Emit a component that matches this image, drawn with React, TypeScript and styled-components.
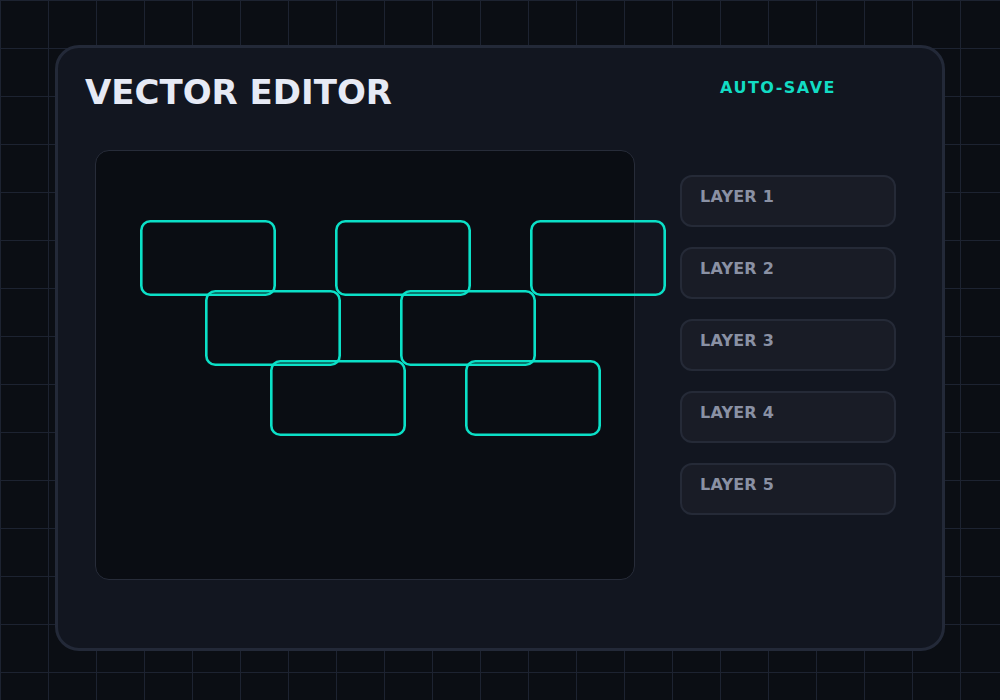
import React from 'react';
import styled, { createGlobalStyle } from 'styled-components';

const GlobalStyle = createGlobalStyle`
  html, body {
    margin: 0;
    padding: 0;
    background: #0b0e14;
  }
  body {
    font-family: "DejaVu Sans", "Liberation Sans", sans-serif;
  }
  * {
    box-sizing: border-box;
  }
`;

const Page = styled.div`
  min-height: 700px;
  padding-top: 45px;
  background-color: #0b0e14;
  background-image:
    linear-gradient(to right, #1d2331 1px, transparent 1px),
    linear-gradient(to bottom, #1d2331 1px, transparent 1px);
  background-size: 48px 48px;
`;

const Card = styled.div`
  width: 890px;
  height: 606px;
  margin: 0 auto;
  padding-top: 24px;
  background: #121620;
  border: 3px solid #232938;
  border-radius: 24px;
`;

const Header = styled.div`
  display: grid;
  grid-template-columns: 1fr 216px;
  column-gap: 45px;
  align-items: start;
  padding: 0 46px 0 27px;
  height: 40px;
`;

const Title = styled.h1`
  margin: 0;
  font-size: 34px;
  line-height: 40px;
  font-weight: bold;
  color: #e6eaf5;
  white-space: nowrap;
`;

const Status = styled.div`
  padding-left: 40px;
  margin-top: 6px;
  font-size: 16px;
  font-weight: bold;
  letter-spacing: 1.5px;
  color: #12dcc4;
  white-space: nowrap;
`;

const Body = styled.div`
  display: flex;
  gap: 45px;
  margin-top: 38px;
  padding-left: 37px;
`;

const Canvas = styled.div`
  position: relative;
  width: 540px;
  height: 430px;
  background: #0a0d13;
  border: 1.5px solid #272c39;
  border-radius: 14px;
  overflow: visible;
`;

const Shapes = styled.svg`
  display: block;
  overflow: visible;
`;

const LayerList = styled.div`
  display: flex;
  flex-direction: column;
  gap: 20px;
  width: 216px;
  margin-top: 25px;
`;

const Layer = styled.div`
  height: 52px;
  padding: 10px 18px;
  background: #191c26;
  border: 2px solid #252a37;
  border-radius: 12px;
  font-size: 16px;
  font-weight: bold;
  letter-spacing: 0.2px;
  color: #8a91a4;
`;

interface Node {
  x: number;
  y: number;
}

const nodes: Node[] = [
  { x: 44, y: 69 },
  { x: 239, y: 69 },
  { x: 434, y: 69 },
  { x: 109, y: 139 },
  { x: 304, y: 139 },
  { x: 174, y: 209 },
  { x: 369, y: 209 },
];

const NODE_W = 136;
const NODE_H = 76;
const STROKE = 2.6;

const layers = ['LAYER 1', 'LAYER 2', 'LAYER 3', 'LAYER 4', 'LAYER 5'];

const App: React.FC = () => {
  return (
    <Page>
      <GlobalStyle />
      <Card>
        <Header>
          <Title>VECTOR EDITOR</Title>
          <Status>AUTO-SAVE</Status>
        </Header>

        <Body>
          <Canvas>
            <Shapes width={537} height={427} viewBox="0 0 537 427">
              {nodes.map((n, i) => (
                <rect
                  key={i}
                  x={n.x + STROKE / 2}
                  y={n.y + STROKE / 2}
                  width={NODE_W - STROKE}
                  height={NODE_H - STROKE}
                  rx={9}
                  fill="none"
                  stroke="#0be0c7"
                  strokeWidth={STROKE}
                />
              ))}
            </Shapes>
          </Canvas>

          <LayerList>
            {layers.map((name) => (
              <Layer key={name}>{name}</Layer>
            ))}
          </LayerList>
        </Body>
      </Card>
    </Page>
  );
};

export default App;
